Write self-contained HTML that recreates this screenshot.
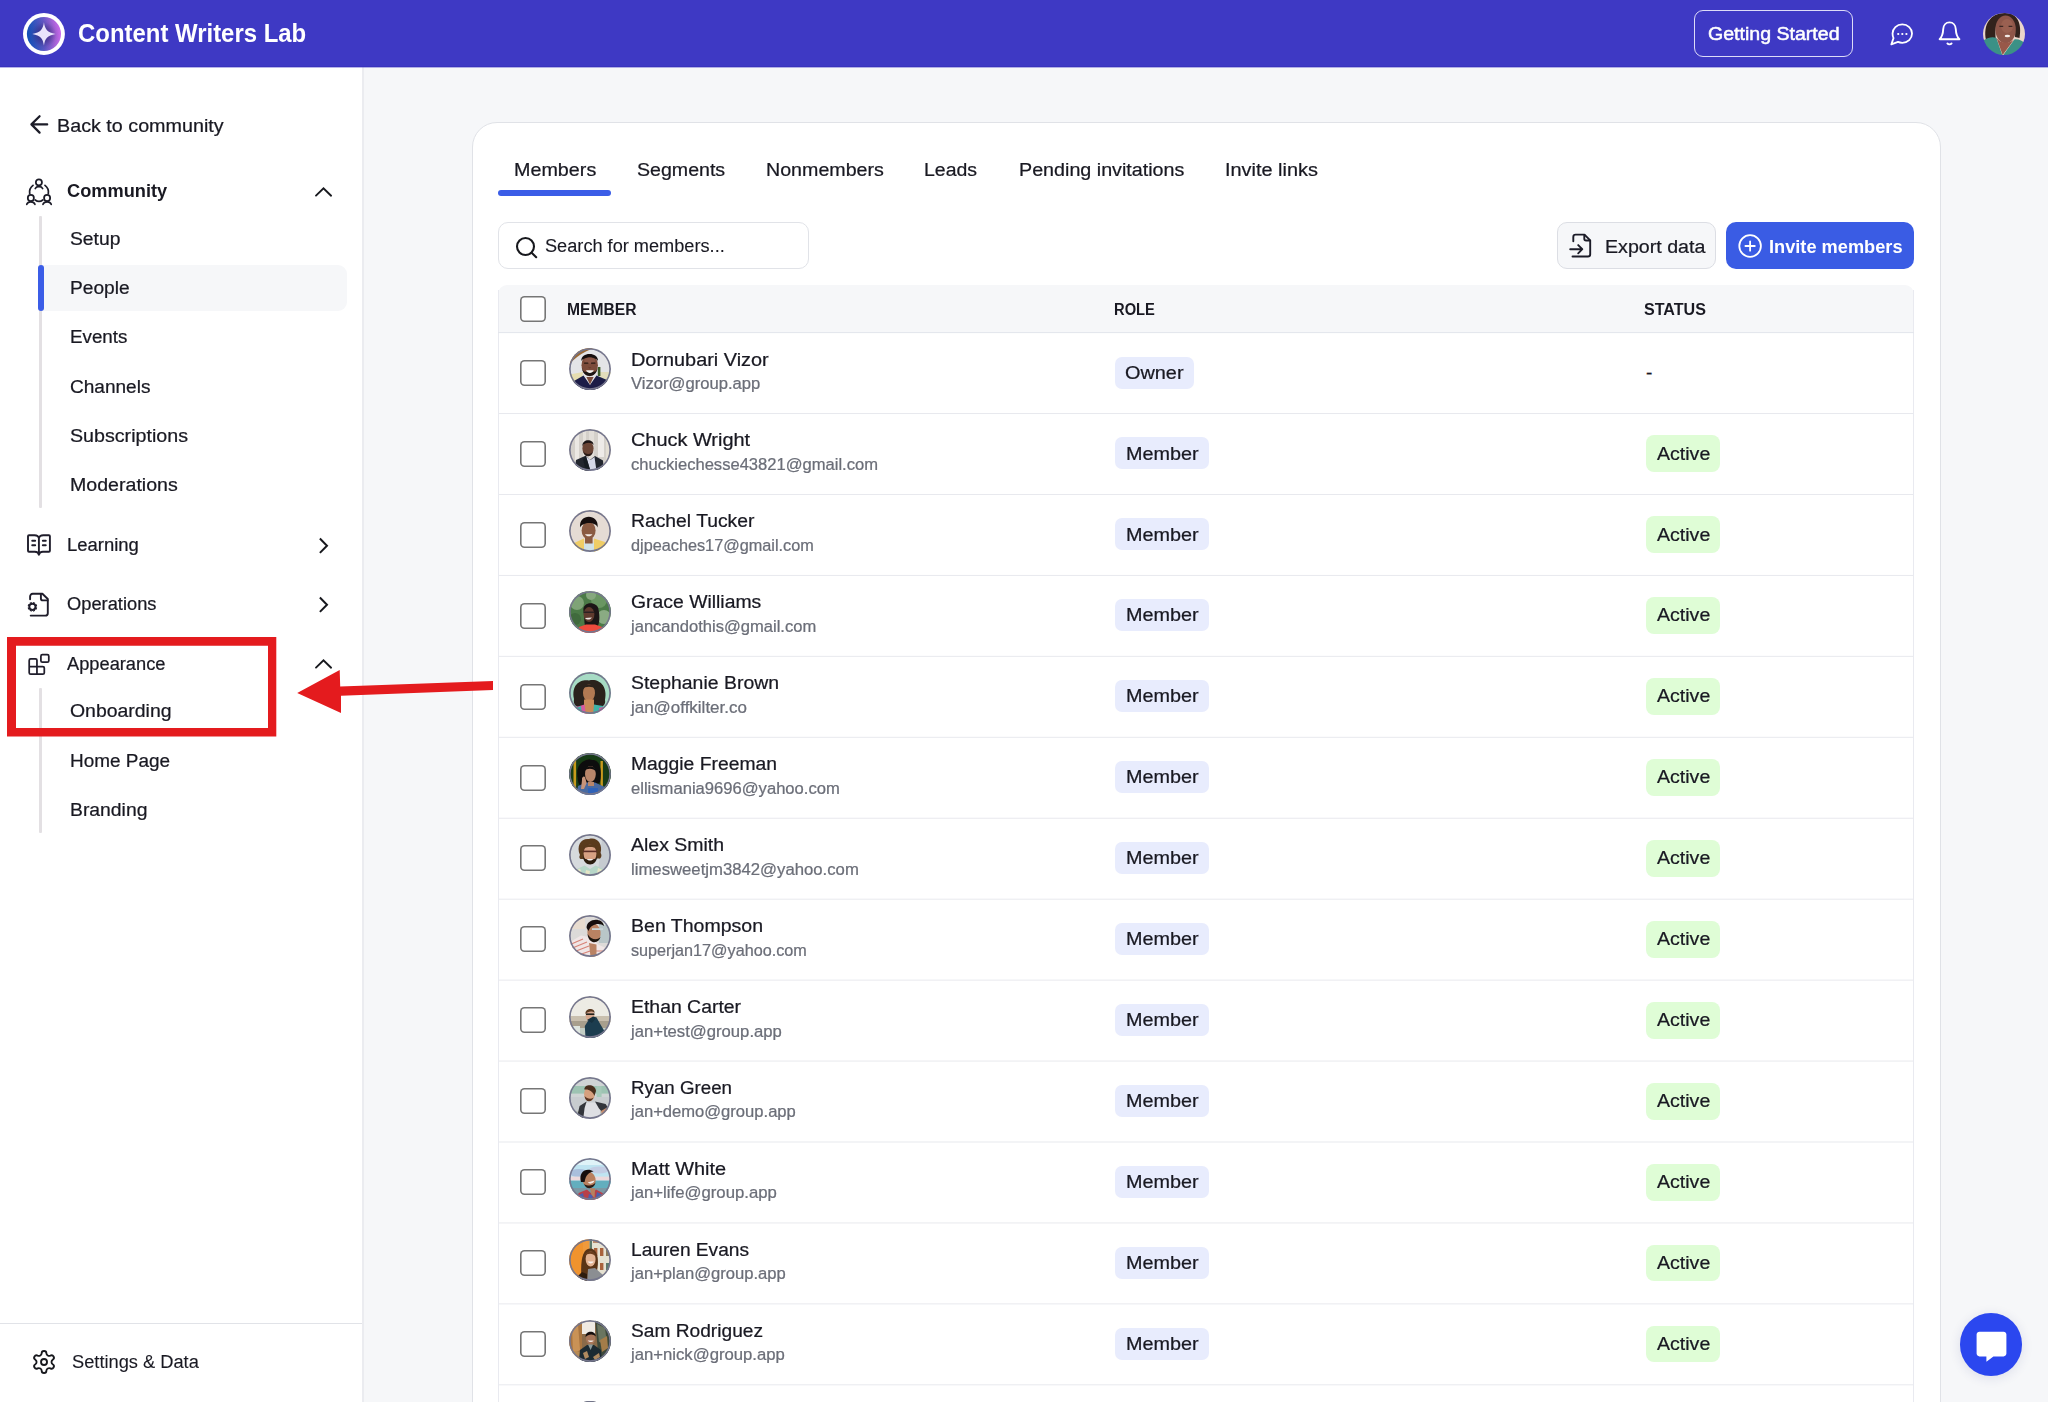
<!DOCTYPE html>
<html lang="en">
<head>
<meta charset="utf-8">
<title>Content Writers Lab - People</title>
<style>
*{box-sizing:border-box;margin:0;padding:0}
html,body{width:2048px;height:1402px;background:#f6f7f9;font-family:"Liberation Sans", sans-serif;}
#root{position:relative;width:2048px;height:1402px;overflow:hidden;background:#f6f7f9}
.abs,.t,.rowline,.cb,.role,.active,.av{position:absolute}
.t{white-space:pre;font-family:"Liberation Sans", sans-serif;transform-origin:0 50%}
#hdr{left:0;top:0;width:2048px;height:67px;background:#3e39c4;border-bottom:1px solid #3932bd}
#hdr2{left:0;top:67px;width:2048px;height:1px;background:rgba(62,57,196,.38)}
#side{left:0;top:67px;width:364px;height:1335px;background:#fff;border-right:2px solid #ebecf0}
#sidefoot{left:0;top:1322.5px;width:362px;height:1.5px;background:#e1e3e8}
.vline{width:3px;background:#e3e0e3;left:39px;border-radius:1px}
#people{left:38px;top:264.8px;width:309px;height:46.6px;background:#f6f7f9;border-radius:4px 9px 9px 4px}
#peoplebar{left:38px;top:264.8px;width:6px;height:46.6px;background:#3b5de7;border-radius:3px}
#card{left:471.5px;top:122px;width:1469.5px;height:1400px;background:#fff;border:1.5px solid #e0e2e7;border-radius:25px}
#tabline{left:498.3px;top:190px;width:112.7px;height:5.6px;background:#3b5de7;border-radius:3px}
#search{left:498.3px;top:222.2px;width:311.2px;height:46.5px;border:1.5px solid #e1e3e8;border-radius:10px;background:#fff}
#export{left:1557.2px;top:222.2px;width:158.6px;height:46.6px;border:1.5px solid #dcdee4;border-radius:10px;background:#f6f7f9}
#invite{left:1726px;top:222.2px;width:188.2px;height:46.6px;border-radius:10px;background:#3a5ce4}
#thead{left:498px;top:285px;width:1416px;height:47.5px;background:#f6f7f9;border-radius:9px 9px 0 0}
#tborderL{left:498px;top:290px;width:1px;height:1200px;background:#e9eaf0}
#tborderR{left:1913px;top:290px;width:1px;height:1200px;background:#e9eaf0}
.rowline{left:499px;width:1414px;height:1px;background:#ebecf1}
.cb{left:520px;width:26px;height:26px;border:none;box-shadow:inset 0 0 0 1.6px #767676;border-radius:4.5px;background:#fff}
.role{left:1115.4px;height:32px;border-radius:7px;background:#e8ecfd}
.active{left:1645.6px;width:74.6px;height:36.8px;border-radius:8px;background:#dffdd6}
.av{left:569px;width:42px;height:42px;border-radius:50%;overflow:hidden;background:#ccc}
.av::after{content:"";position:absolute;left:0;top:0;right:0;bottom:0;border-radius:50%;box-shadow:inset 0 0 0 1.7px #75768d}
.av svg{display:block;width:100%;height:100%}
#getstarted{left:1693.7px;top:10px;width:159.7px;height:47.1px;border:1.4px solid #dddcf8;border-radius:9px}
#fab{left:1960px;top:1313.2px;width:62.4px;height:62.4px;border-radius:50%;background:#2b47ef;box-shadow:0 2px 12px rgba(30,40,120,.12)}
#redbox{left:7px;top:637px;width:269.2px;height:99.4px;border:8.6px solid #e41b1e}
svg{position:absolute;overflow:visible}
</style>
</head>
<body>
<div id="root">
<div id="side" class="abs"></div>
<div id="sidefoot" class="abs"></div>
<div id="card" class="abs"></div>
<div id="hdr" class="abs"></div>
<div id="hdr2" class="abs"></div>

<!-- header -->
<svg style="left:23.1px;top:12.8px" width="41.9" height="41.9" viewBox="0 0 42 42"><defs><linearGradient id="lg" x1="0" y1="0.55" x2="1" y2="0.45"><stop offset="0" stop-color="#0f4fb6"/><stop offset="0.22" stop-color="#2f55bd"/><stop offset="0.5" stop-color="#6258c6"/><stop offset="0.8" stop-color="#a764d8"/><stop offset="1" stop-color="#c868ea"/></linearGradient><radialGradient id="rg" cx="0.5" cy="0.52" r="0.5"><stop offset="0" stop-color="#2a1f6e" stop-opacity="0.75"/><stop offset="0.45" stop-color="#2a1f6e" stop-opacity="0.45"/><stop offset="0.8" stop-color="#2a1f6e" stop-opacity="0.08"/><stop offset="1" stop-color="#2a1f6e" stop-opacity="0"/></radialGradient></defs><circle cx="21" cy="21" r="21" fill="#fff"/><circle cx="21" cy="21" r="17.1" fill="url(#lg)"/><circle cx="21" cy="21" r="15.5" fill="url(#rg)"/><path d="M21 9.3C22 16.3 24.3 19.5 32.7 21C24.3 22.5 22 25.7 21 32.7C20 25.7 17.7 22.5 9.3 21C17.7 19.5 20 16.3 21 9.3Z" fill="#e9e4fb"/></svg>

<div id="getstarted" class="abs"></div>
<svg style="left:1890.4px;top:22.6px" width="23.4" height="23" viewBox="0 0 24 23" fill="none" stroke="#fff" stroke-width="1.85" stroke-linecap="round" stroke-linejoin="round"><path d="M12.6 1.2C18.2 1.2 22.6 5.4 22.6 10.6C22.6 15.8 18.2 20 12.6 20C11 20 9.5 19.7 8.2 19.1L1.4 21.6L3.6 15.2C2.9 13.8 2.6 12.3 2.6 10.6C2.6 5.4 7 1.2 12.6 1.2Z"/><path d="M8.4 11H8.5M12.6 11H12.7M16.8 11H16.9" stroke-width="2.2"/></svg>

<svg style="left:1938.2px;top:21.2px" width="23" height="25" viewBox="0 0 23 25" fill="none" stroke="#fff" stroke-width="1.9" stroke-linecap="round" stroke-linejoin="round"><path d="M11.5 1.4C7.9 1.4 5.4 4.2 5.2 8.2C5 13 3.4 16.4 1.6 18.2H21.4C19.6 16.4 18 13 17.8 8.2C17.6 4.2 15.1 1.4 11.5 1.4Z"/><path d="M9.4 22.4C10.4 23.7 12.6 23.7 13.6 22.4"/></svg>

<svg style="left:1983px;top:12.7px" width="42" height="42" viewBox="0 0 42 42"><defs><clipPath id="uc"><circle cx="21" cy="21" r="21"/></clipPath><filter id="bl2" x="-5%" y="-5%" width="110%" height="110%"><feGaussianBlur stdDeviation="0.7"/></filter></defs><g clip-path="url(#uc)"><g filter="url(#bl2)"><rect x="-2" y="-2" width="46" height="46" fill="#ead6ca"/><path d="M3 27C0 12 7 0 22 0C35 0 39 11 36.5 25L32 24C33 14 30 5 22 5C14 5 11 14 13 28Z" fill="#33221f"/><ellipse cx="22.6" cy="16.4" rx="10.2" ry="14" fill="#8e5648"/><ellipse cx="24" cy="13" rx="6" ry="7" fill="#9a6051"/><path d="M-2 29C5 24 10 23.6 13.4 25L19.6 43L31.4 26.4C36 26 40 28 44 32V46H-2Z" fill="#3a9186"/><path d="M13.4 24.6L19.6 42L31 26.6C25 31.6 17 30.6 13.4 24.6Z" fill="#98594a"/><ellipse cx="24.4" cy="23" rx="2.7" ry="1.3" fill="#f3e9e6"/><path d="M16.4 13.4H20.2M25.6 13.4H29.4" stroke="#3a2622" stroke-width="1.2"/></g></g></svg>


<!-- sidebar -->
<svg style="left:30px;top:115px" width="18" height="19" viewBox="0 0 18 19"><path d="M17.2 9.4H1.6M9.6 1.2L1.4 9.4L9.6 17.6" fill="none" stroke="#1c1c28" stroke-width="2.2" stroke-linecap="round" stroke-linejoin="round"/></svg>

<svg style="left:26px;top:179px" width="26" height="26" viewBox="0 0 26 26" fill="none" stroke="#1c1c28" stroke-width="1.75" stroke-linecap="round"><circle cx="12.9" cy="3.35" r="3.05"/><path d="M9.3 9.5C10.4 6.9 15.5 6.9 16.6 9.5"/><circle cx="4.85" cy="19" r="3.05"/><path d="M0.8 25.3C1.9 22.1 7.8 22.1 8.9 25.3"/><circle cx="21.1" cy="19" r="3.05"/><path d="M17 25.3C18.1 22.1 24.1 22.1 25.2 25.3"/><path d="M7 6.4C4.4 8.4 3.2 11.6 3.7 14.6M19 6.4C21.6 8.4 22.8 11.6 22.3 14.6M9.2 21C11.4 22.6 14.6 22.6 16.8 21"/></svg>

<svg style="left:315px;top:187px" width="18" height="11" viewBox="0 0 18 11"><path d="M1 8.6L8.5 1.4L16.1 8.7" fill="none" stroke="#17181d" stroke-width="1.9" stroke-linecap="round" stroke-linejoin="miter"/></svg>

<div class="abs vline" style="top:215.5px;height:292.5px"></div>
<div id="people" class="abs"></div>
<div id="peoplebar" class="abs"></div>
<svg style="left:27px;top:534px" width="24" height="22" viewBox="0 0 24 22" fill="none" stroke="#1f1d2b" stroke-width="1.9" stroke-linecap="round" stroke-linejoin="round"><path d="M11.9 4.4V20.7M11.9 4.4C11.5 2.3 9.9 1.2 7.5 1.2H2C1.4 1.2 1 1.6 1 2.2V16.7C1 17.3 1.4 17.7 2 17.7H7.9C10.1 17.7 11.5 18.7 11.9 20.7M11.9 4.4C12.3 2.3 13.9 1.2 16.3 1.2H21.9C22.5 1.2 22.9 1.6 22.9 2.2V16.7C22.9 17.3 22.5 17.7 21.9 17.7H15.9C13.7 17.7 12.3 18.7 11.9 20.7"/><path d="M5.3 6.8H8.1M5.3 11.2H8.1M15.9 6.8H18.7M15.9 11.2H18.7" stroke-width="2.1"/></svg>

<svg style="left:318px;top:537.5px" width="11" height="16" viewBox="0 0 11 16"><path d="M2.6 1.2L9 7.7L2.6 14.2" fill="none" stroke="#17181d" stroke-width="2" stroke-linecap="square" stroke-linejoin="miter"/></svg>

<svg style="left:27px;top:593px" width="22" height="24" viewBox="0 0 22 24" fill="none" stroke="#1f1d2b" stroke-width="1.9" stroke-linecap="round" stroke-linejoin="round"><path d="M3.1 6.3V3.4C3.1 1.9 4.1 0.8 5.7 0.8H15.4L20.8 6V20.2C20.8 21.7 19.7 22.6 18.3 22.6H3.7"/><path d="M13.9 1.1V5.4C13.9 6.6 14.7 7.4 15.9 7.4H20.6"/><circle cx="5.4" cy="13.85" r="3.1"/><path d="M8.82 15.27L9.79 15.67M6.82 17.27L7.22 18.24M3.98 17.27L3.58 18.24M1.98 15.27L1.01 15.67M1.98 12.43L1.01 12.03M3.98 10.43L3.58 9.46M6.82 10.43L7.22 9.46M8.82 12.43L9.79 12.03" stroke-width="2.1" stroke-linecap="butt"/></svg>

<svg style="left:318px;top:597px" width="11" height="16" viewBox="0 0 11 16"><path d="M2.6 1.2L9 7.7L2.6 14.2" fill="none" stroke="#17181d" stroke-width="2" stroke-linecap="square" stroke-linejoin="miter"/></svg>

<svg style="left:28px;top:654px" width="22" height="22" viewBox="0 0 22 22" fill="none" stroke="#1f1d2b" stroke-width="1.75" stroke-linejoin="round"><path d="M2.7 4.9H7.5C8.3 4.9 8.95 5.5 8.95 6.3V12.55H14.8C15.6 12.55 16.3 13.2 16.3 14V18.7C16.3 19.5 15.6 20.2 14.8 20.2H2.7C1.9 20.2 1.2 19.5 1.2 18.7V6.4C1.2 5.6 1.9 4.9 2.7 4.9ZM8.95 12.55V20.2M1.2 12.55H8.95"/><rect x="12.9" y="0.7" width="7.9" height="7.5" rx="1.5"/></svg>

<svg style="left:315px;top:659.1px" width="18" height="11" viewBox="0 0 18 11"><path d="M1 8.6L8.5 1.4L16.1 8.7" fill="none" stroke="#17181d" stroke-width="1.9" stroke-linecap="round" stroke-linejoin="miter"/></svg>

<div class="abs vline" style="top:688px;height:144.5px"></div>
<svg style="left:32px;top:1349.8px" width="24" height="24" viewBox="0 0 24 24" fill="none" stroke="#17181d" stroke-width="1.85" stroke-linejoin="round"><path d="M9.68 3.31A2.35 2.35 0 0 1 14.38 3.31A2.77 2.77 0 0 0 18.38 5.62A2.35 2.35 0 0 1 20.73 9.69A2.77 2.77 0 0 0 20.73 14.31A2.35 2.35 0 0 1 18.38 18.38A2.77 2.77 0 0 0 14.38 20.69A2.35 2.35 0 0 1 9.68 20.69A2.77 2.77 0 0 0 5.68 18.38A2.35 2.35 0 0 1 3.33 14.31A2.77 2.77 0 0 0 3.33 9.69A2.35 2.35 0 0 1 5.68 5.62A2.77 2.77 0 0 0 9.68 3.31Z"/><circle cx="12.03" cy="12" r="3.0"/></svg>


<!-- main -->
<div id="tabline" class="abs"></div>
<div id="search" class="abs"></div>
<svg style="left:515.3px;top:235.7px" width="23" height="23" viewBox="0 0 23 23" fill="none" stroke="#17181d" stroke-width="2.1" stroke-linecap="round"><circle cx="10.5" cy="10.5" r="8.5"/><path d="M16.6 16.7L21.2 21.2"/></svg>

<div id="export" class="abs"></div>
<svg style="left:1569px;top:233px" width="23" height="25" viewBox="0 0 23 25" fill="none" stroke="#1c1c28" stroke-width="1.9" stroke-linecap="round" stroke-linejoin="round"><path d="M4.3 8.2V3.9C4.3 2.6 5.3 1.6 6.6 1.6H15.5L21.2 7.3V21.2C21.2 22.5 20.2 23.5 18.9 23.5H3.5"/><path d="M15.3 1.9V5.7C15.3 6.7 16.1 7.5 17.1 7.5H20.9"/><path d="M1.2 16.2H13M9.2 12.1L13.3 16.2L9.2 20.3"/></svg>

<div id="invite" class="abs"></div>
<svg style="left:1738px;top:233.8px" width="24" height="24" viewBox="0 0 24 24" fill="none" stroke="#fff" stroke-width="1.8" stroke-linecap="round"><circle cx="12.1" cy="12" r="10.8"/><path d="M12.1 7.3V16.7M7.4 12H16.8"/></svg>

<div id="thead" class="abs"></div>
<div id="tborderL" class="abs"></div>
<div id="tborderR" class="abs"></div>
<div class="cb" style="top:296px"></div>
<div class="cb" style="top:360px"></div>
<div class="role" style="top:356.55px;width:78.6px"></div>
<div class="av" style="top:348.45px"><svg viewBox="0 0 42 42" preserveAspectRatio="none"><defs><filter id="bl" x="-5%" y="-5%" width="110%" height="110%"><feGaussianBlur stdDeviation="0.7"/></filter></defs><g filter="url(#bl)"><rect x="-2" y="-2" width="46" height="46" fill="#e4e4e7"/><path d="M-2 -2H32C18 1 5 9 -2 20Z" fill="#9a6935"/><path d="M-2 27L14 24L12 38L-2 38Z" fill="#e6ddb0"/><path d="M30 24H44V36H31Z" fill="#e2dcbc"/><rect x="28.8" y="19" width="2.6" height="9" fill="#3e5a2c"/><ellipse cx="20.7" cy="17.2" rx="8.2" ry="11" fill="#7c4b3b"/><path d="M12.3 13C11.5 3.5 29.6 3.5 29 13C27 8.2 14.6 8.2 12.3 13Z" fill="#17110f"/><path d="M12.8 19C13.6 31 27.8 31 28.7 19C27.4 25.6 24 23.6 20.7 23.6C17.5 23.6 14.2 25.6 12.8 19Z" fill="#1e1512"/><ellipse cx="20.7" cy="12.6" rx="5.6" ry="3" fill="#8a5646"/><path d="M15.6 15.2H18.8M22.6 15.2H25.8" stroke="#2a1a16" stroke-width="1.3" stroke-linecap="round"/><path d="M19.6 19.4C20.3 20 21.1 20 21.8 19.4" stroke="#5e352a" stroke-width="0.9" fill="none"/><path d="M17 22.2C18.8 25.8 23 25.8 24.8 22.2Z" fill="#f6f3f0"/><path d="M-2 44L5 33L14.5 27.5L21 37L27.5 27.5L38 32L44 44Z" fill="#1a1e47"/><path d="M17.4 29L21 36.5L24.6 29Z" fill="#7c4b3b"/></g></svg>
</div>
<div class="cb" style="top:441px"></div>
<div class="role" style="top:437.49px;width:93.8px"></div>
<div class="active" style="top:435.29px"></div>
<div class="av" style="top:429.39px"><svg viewBox="0 0 42 42" preserveAspectRatio="none"><g filter="url(#bl)"><rect x="-2" y="-2" width="46" height="46" fill="#d4d0ca"/><rect x="6" y="-2" width="4" height="46" fill="#ebe8e3"/><rect x="14" y="-2" width="3" height="46" fill="#e6e2dc"/><rect x="20" y="-2" width="5" height="46" fill="#e2ded8"/><rect x="29" y="-2" width="6" height="30" fill="#eeebe8"/><rect x="37" y="-2" width="5" height="46" fill="#e4dfd4"/><ellipse cx="19" cy="19.5" rx="5.6" ry="7.6" fill="#6b4435"/><path d="M13.4 17C13 9.5 24.6 9.5 24.6 16C22.5 12.6 15.5 13 13.4 17Z" fill="#1a1413"/><path d="M14 22C15 29 23 29 24.2 22C22.5 26 16 26 14 22Z" fill="#2a1c18"/><path d="M5 44L7 31L16.5 26.8L21 31L26 27L34 31.5L35 44Z" fill="#22262f"/><path d="M17 27.5L21.5 42L27.5 42L25.5 28L21.5 31Z" fill="#d6d9e8"/><path d="M17 27L22 44L17 44L14 30Z" fill="#191c24"/></g></svg>
</div>
<div class="cb" style="top:522px"></div>
<div class="role" style="top:518.43px;width:93.8px"></div>
<div class="active" style="top:516.23px"></div>
<div class="av" style="top:510.33px"><svg viewBox="0 0 42 42" preserveAspectRatio="none"><g filter="url(#bl)"><rect x="-2" y="-2" width="46" height="46" fill="#e5dbd4"/><ellipse cx="19.6" cy="20.5" rx="7" ry="9" fill="#8a5a42"/><path d="M11.2 17.5C9 3 30.5 3 28.6 17.5C27 11.5 13.5 11.5 11.2 17.5Z" fill="#15100f"/><path d="M16 24.3C17.8 27 21.6 27 23.4 24.3Z" fill="#f4eeea"/><path d="M2 44L5 33L15 28.6L15.5 44Z" fill="#efcd66"/><path d="M40 44L36 32L25 28.6L24.5 44Z" fill="#efcd66"/><path d="M15 33H25V44H15Z" fill="#cfe1e8"/><path d="M16 27.5H23.6V33.5H16Z" fill="#8a5a42"/></g></svg>
</div>
<div class="cb" style="top:603px"></div>
<div class="role" style="top:599.37px;width:93.8px"></div>
<div class="active" style="top:597.17px"></div>
<div class="av" style="top:591.27px"><svg viewBox="0 0 42 42" preserveAspectRatio="none"><g filter="url(#bl)"><rect x="-2" y="-2" width="46" height="46" fill="#4c7a47"/><circle cx="8" cy="12" r="7" fill="#7fa377"/><circle cx="30" cy="9" r="8" fill="#6a9662"/><circle cx="35" cy="26" r="7" fill="#8aab83"/><circle cx="6" cy="28" r="6" fill="#3f6a3c"/><circle cx="22" cy="4" r="5" fill="#86a87e"/><path d="M14.5 20C13 10 29 10 29.6 19C31 26 30.5 32 28.5 36L24 34L16 35C15 31 15.5 25 14.5 20Z" fill="#1c1616"/><ellipse cx="20" cy="23.5" rx="5.4" ry="7.6" fill="#5e3a2e"/><path d="M14.6 20.5H25V22H14.6Z" fill="#2a2424"/><path d="M16 27C18 29.4 21.4 29 23 26.6Z" fill="#efe6e2"/><path d="M8 44L10 36L17 33.6L26 33.6L36 37L37 44Z" fill="#ee4b3c"/></g></svg>
</div>
<div class="cb" style="top:684px"></div>
<div class="role" style="top:680.31px;width:93.8px"></div>
<div class="active" style="top:678.11px"></div>
<div class="av" style="top:672.21px"><svg viewBox="0 0 42 42" preserveAspectRatio="none"><g filter="url(#bl)"><rect x="-2" y="-2" width="46" height="46" fill="#a6dbc4"/><path d="M5 27C2 12 12 7 20 8.5C30 6 39 14 36 28C37 33 33 36 30 34L12 35C7 36 4 32 5 27Z" fill="#2a211c"/><ellipse cx="20" cy="21" rx="6" ry="8.4" fill="#b27a52"/><path d="M13.6 17C15 11 25 11 26.4 17C24 14 16 14 13.6 17Z" fill="#2a211c"/><path d="M15 27.5H25V44H15Z" fill="#c98a58"/><path d="M4 44L7 35L15.5 32.4L17 44Z" fill="#d85aa0"/><path d="M38 44L34 34L25 32.4L24 44Z" fill="#3fb3a8"/><path d="M7 36L12 34L13 42L8 42Z" fill="#3fb3a8"/><path d="M30 36L34 35L35 42L30 42Z" fill="#d85aa0"/></g></svg>
</div>
<div class="cb" style="top:765px"></div>
<div class="role" style="top:761.25px;width:93.8px"></div>
<div class="active" style="top:759.05px"></div>
<div class="av" style="top:753.15px"><svg viewBox="0 0 42 42" preserveAspectRatio="none"><g filter="url(#bl)"><rect x="-2" y="-2" width="46" height="46" fill="#173a12"/><rect x="4.5" y="4" width="2.6" height="34" fill="#c89a1c"/><rect x="31.5" y="8" width="2.4" height="26" fill="#c89a1c"/><path d="M28 -2L44 -2L44 14Z" fill="#2f6a2a"/><path d="M8.5 24C6 8 20 5 23 7C32 6 33 20 31 29L26 33L12 33C9 31 9 27 8.5 24Z" fill="#0e0c0d"/><ellipse cx="21.4" cy="21" rx="5.4" ry="8" fill="#b8866a"/><path d="M15.6 18C17 11 27 12 27 19C25 15 18 14.6 15.6 18Z" fill="#0e0c0d"/><path d="M7 44L9 33L17 29.6L26 29.6L36 34L37 44Z" fill="#4a6aa0"/><path d="M13 27C12.5 24 15 22.6 16.2 24.4L17.6 30L15 36L12 36Z" fill="#c6947a"/><path d="M19 29H25V33H19Z" fill="#b8866a"/><path d="M19 35H29V44H19Z" fill="#2f62b8"/></g></svg>
</div>
<div class="cb" style="top:845px"></div>
<div class="role" style="top:842.19px;width:93.8px"></div>
<div class="active" style="top:839.99px"></div>
<div class="av" style="top:834.09px"><svg viewBox="0 0 42 42" preserveAspectRatio="none"><g filter="url(#bl)"><rect x="-2" y="-2" width="46" height="46" fill="#d6dadd"/><path d="M34 -2H44V44H28Z" fill="#c6cbd0"/><path d="M11 21C7 12 12 4 20 5C28 2.5 34 10 31.6 19C33.6 22 31.6 25.4 29.6 24.6L13 25C10.6 25.6 9.6 23 11 21Z" fill="#5a3a1f"/><ellipse cx="21" cy="19.6" rx="6.4" ry="9" fill="#d7a183"/><path d="M14.4 15C15.6 8.8 26.6 8.8 27.8 15C25 12.4 17.4 12.4 14.4 15Z" fill="#5a3a1f"/><path d="M14 21.6C14 33.6 28.2 33.6 28.2 21.6C26.6 26.8 24.2 25 21 25C17.8 25 15.4 26.8 14 21.6Z" fill="#2a1a10"/><path d="M14.2 16.6H28V18.2H14.2Z" fill="#5c2e26"/><path d="M17.8 25C19.2 27 22.8 27 24.2 25Z" fill="#f4eeea"/><path d="M4 44L7 35.6L15.6 31.6L21 35L26.6 31.6L35.4 35.6L38 44Z" fill="#b6d6c8"/><path d="M7 36.6L11 34.6L13 40L9 43ZM29 34L34 36L32 41L28 39ZM17 36L21 37L20 42L16 41Z" fill="#e6e6c6"/></g></svg>
</div>
<div class="cb" style="top:926px"></div>
<div class="role" style="top:923.13px;width:93.8px"></div>
<div class="active" style="top:920.93px"></div>
<div class="av" style="top:915.03px"><svg viewBox="0 0 42 42" preserveAspectRatio="none"><g filter="url(#bl)"><rect x="-2" y="-2" width="46" height="46" fill="#dcdad8"/><rect x="-2" y="-2" width="18" height="16" fill="#e8dccf"/><rect x="30" y="8" width="14" height="20" fill="#b9c6c8"/><rect x="34" y="-2" width="10" height="12" fill="#e9ecec"/><path d="M-2 44L1 27L12 20.4L20 22L30 30L37 33L38 44Z" fill="#f0e6e6"/><path d="M0 30L14 24M1 34L18 27M2 38L20 31M4 42L24 35M26 36L36 36M26 40L37 40" stroke="#d88378" stroke-width="1.2" fill="none"/><ellipse cx="25" cy="17.5" rx="6.6" ry="9" transform="rotate(-8 25 17.5)" fill="#b98263"/><path d="M17.6 13C17 3 34 1.6 35 11C31.6 7.6 22 8 19.6 16Z" fill="#16110f"/><path d="M18.6 19C19 29 30 30 31.6 21.6C29 26 21.6 25 18.6 19Z" fill="#1d1411"/><path d="M23 13.2H34V15H23Z" fill="#c9d4d6"/><path d="M20 28L27.5 29.5L27.5 42L21.5 42Z" fill="#b98263"/></g></svg>
</div>
<div class="cb" style="top:1007px"></div>
<div class="role" style="top:1004.07px;width:93.8px"></div>
<div class="active" style="top:1001.87px"></div>
<div class="av" style="top:995.97px"><svg viewBox="0 0 42 42" preserveAspectRatio="none"><g filter="url(#bl)"><rect x="-2" y="-2" width="46" height="46" fill="#edebe4"/><rect x="-2" y="20" width="46" height="6" fill="#c9bfae"/><rect x="-2" y="25" width="46" height="8" fill="#a89f8d"/><rect x="-2" y="32" width="46" height="12" fill="#c3cec5"/><rect x="3" y="30" width="8" height="12" fill="#dfe6e0"/><ellipse cx="21" cy="19.6" rx="4.4" ry="5.6" fill="#d8a98f"/><path d="M16.4 18C16 11.4 26 11.4 25.6 17C24 14.6 18.6 15 16.4 18Z" fill="#5a3a24"/><path d="M17 17.4H25.4V19H17Z" fill="#24201e"/><path d="M16.6 44L15.8 30L19 25L23 24.6L27.6 21.4L30.6 27L36 36L37 44Z" fill="#1f3d50"/><path d="M18 24L23 27L27.6 21.6L24 20.6Z" fill="#16303f"/></g></svg>
</div>
<div class="cb" style="top:1088px"></div>
<div class="role" style="top:1085.01px;width:93.8px"></div>
<div class="active" style="top:1082.81px"></div>
<div class="av" style="top:1076.91px"><svg viewBox="0 0 42 42" preserveAspectRatio="none"><g filter="url(#bl)"><rect x="-2" y="-2" width="46" height="46" fill="#cfd4d4"/><rect x="-2" y="9" width="46" height="7.6" fill="#9dc3b2"/><rect x="27.6" y="9" width="5" height="14" fill="#a6c9b8"/><rect x="-2" y="20" width="46" height="14" fill="#c8cccf"/><rect x="-2" y="34" width="46" height="10" fill="#b9bfb8"/><ellipse cx="20.4" cy="17" rx="5.4" ry="7" fill="#d6a07e"/><path d="M15.4 12.6C15 6.6 26.6 6.6 27 14L25.4 19C24 14 19 11.6 15.4 12.6Z" fill="#4a2e1c"/><path d="M15.6 19C16 25.4 22.6 26 24.6 20.6C22 22.6 18 22 15.6 19Z" fill="#5a3420"/><path d="M13.4 44L13.6 30L18 25.6L26 25.6L31 32L31.6 44Z" fill="#dedfe3"/><path d="M8 40L10.6 29L17.6 24.6L15.6 31L14.2 42Z" fill="#33353a"/><path d="M26 24.6L36.6 27L40 32L34 36L30 31.6Z" fill="#33353a"/><path d="M32 34L38 30.6L39.6 34L33.6 39Z" fill="#c98e6e"/></g></svg>
</div>
<div class="cb" style="top:1169px"></div>
<div class="role" style="top:1165.95px;width:93.8px"></div>
<div class="active" style="top:1163.75px"></div>
<div class="av" style="top:1157.85px"><svg viewBox="0 0 42 42" preserveAspectRatio="none"><g filter="url(#bl)"><rect x="-2" y="-2" width="46" height="46" fill="#bfe4f1"/><rect x="-2" y="-2" width="46" height="9" fill="#dff3f8"/><ellipse cx="10" cy="15" rx="10" ry="4" fill="#a9bfdc"/><ellipse cx="30" cy="12" rx="10" ry="3.6" fill="#c2cde4"/><rect x="-2" y="18.6" width="46" height="4" fill="#ecd9dc"/><rect x="-2" y="22.6" width="46" height="9" fill="#63aebe"/><rect x="-2" y="30" width="46" height="14" fill="#7b98a4"/><ellipse cx="20" cy="21.6" rx="6.6" ry="8" transform="rotate(-14 20 21.6)" fill="#b8805e"/><path d="M12 24C9 13 18 9 24.6 13.4C20 14 16.6 17 15.6 24Z" fill="#16110f"/><path d="M15 26C17 32 25 31.6 26.6 24.6C24 28 19 28.6 15 26Z" fill="#2a1a14"/><path d="M18.6 24.6C21 26.6 24.6 25.6 25.6 22.6Z" fill="#f1ebe8"/><path d="M7 44L9.6 35L18 31.6L23 36L27 31.6L34.6 35.6L36 44Z" fill="#b8414a"/><path d="M10 37L14 35L15 40L11 42ZM28 34L32 36L31 41L27 39ZM20 36L24 37L23 42L19 41Z" fill="#4b5fae"/><path d="M21 30L26 30.6L25.6 40L22.6 37Z" fill="#b8805e"/></g></svg>
</div>
<div class="cb" style="top:1250px"></div>
<div class="role" style="top:1246.89px;width:93.8px"></div>
<div class="active" style="top:1244.69px"></div>
<div class="av" style="top:1238.79px"><svg viewBox="0 0 42 42" preserveAspectRatio="none"><g filter="url(#bl)"><rect x="-2" y="-2" width="46" height="46" fill="#ef9a3e"/><path d="M-2 -2H14V44H-2Z" fill="#f0932f"/><rect x="20.6" y="-2" width="24" height="46" fill="#e6e2d2"/><rect x="20.6" y="-2" width="2.4" height="46" fill="#5d7a6a"/><rect x="25" y="9" width="3.4" height="8" fill="#a9623a"/><rect x="31" y="9" width="3.4" height="8" fill="#a9623a"/><rect x="37" y="9" width="3.4" height="8" fill="#8a7a5a"/><rect x="31" y="24" width="3.4" height="7" fill="#a9623a"/><rect x="37" y="24" width="3.4" height="7" fill="#5d7a6a"/><rect x="24" y="1" width="6" height="3" fill="#b98a6a"/><path d="M12.6 40C11 22 13.6 9.6 21 9.6C28.6 9.6 29.6 20 28.6 28L27 40Z" fill="#5a3418"/><ellipse cx="21.6" cy="20" rx="5" ry="7.4" fill="#e2b392"/><path d="M16 17C17 10.6 26 10.6 27 18C24 14 19 14 16 17Z" fill="#6a3e1c"/><path d="M18.6 22.6C20 25 23.4 25 24.8 22.4Z" fill="#f7f2ee"/><path d="M19 30L26 29L34 36L35 44L18 44Z" fill="#8b8e92"/><path d="M6 40L13 33L18 35L18 44L6 44Z" fill="#2f1d10"/></g></svg>
</div>
<div class="cb" style="top:1331px"></div>
<div class="role" style="top:1327.83px;width:93.8px"></div>
<div class="active" style="top:1325.63px"></div>
<div class="av" style="top:1319.73px"><svg viewBox="0 0 42 42" preserveAspectRatio="none"><g filter="url(#bl)"><rect x="-2" y="-2" width="46" height="46" fill="#8a6a48"/><rect x="13" y="-2" width="13" height="16" fill="#efe9e2"/><path d="M-2 -2H13V44H-2Z" fill="#a9743f"/><path d="M3 6L9 4L11 30L4 34Z" fill="#c99256"/><path d="M26 -2H44V44H30Z" fill="#3e4a3a"/><path d="M28 4L36 8L38 24L30 22Z" fill="#6a7461"/><path d="M-2 30L12 32L13 44L-2 44Z" fill="#b78a52"/><path d="M31 20L38 16L39 28L33 32Z" fill="#a47c49"/><ellipse cx="21.6" cy="18.6" rx="4.6" ry="6" fill="#a8765a"/><path d="M16.6 17C16 10 27 10 26.8 16.6C25 13.6 19 13.6 16.6 17Z" fill="#14100f"/><path d="M18.8 20.6C20 22.6 23.4 22.6 24.6 20.4Z" fill="#eee6e2"/><path d="M9.6 44L11 30L18 25L25 25L32 30L33 44Z" fill="#1d2a30"/><path d="M19 24.6L21.6 30L24 24.6Z" fill="#8b9a9c"/><path d="M14 33L18 31L20 37L16 39ZM24 37L30 33L31 37L26 40Z" fill="#b08a60"/></g></svg>
</div>
<div class="av" style="top:1400.67px"><svg viewBox="0 0 42 42" preserveAspectRatio="none"><g filter="url(#bl)"><rect x="-2" y="-2" width="46" height="46" fill="#5a5f70"/></g></svg>
</div>
<span class="t" style="left:78.02px;top:19.57px;font-size:26.38px;line-height:26.38px;font-weight:700;color:#fff;transform:scaleX(0.9073);">Content Writers Lab</span>
<span class="t" style="left:1707.82px;top:24.82px;font-size:18.88px;line-height:18.88px;font-weight:400;color:#fff;transform:scaleX(1.0371);-webkit-text-stroke:0.5px #fff;">Getting Started</span>
<span class="t" style="left:57.11px;top:115.82px;font-size:18.99px;line-height:18.99px;font-weight:400;color:#191922;transform:scaleX(1.0393);-webkit-text-stroke:0.24px;">Back to community</span>
<span class="t" style="left:67.18px;top:182.37px;font-size:18.46px;line-height:18.46px;font-weight:700;color:#191922;transform:scaleX(0.9876);">Community</span>
<span class="t" style="left:70.03px;top:228.82px;font-size:18.99px;line-height:18.99px;font-weight:400;color:#191922;transform:scaleX(1.0164);-webkit-text-stroke:0.24px;">Setup</span>
<span class="t" style="left:70.04px;top:278.06px;font-size:18.99px;line-height:18.99px;font-weight:400;color:#191922;transform:scaleX(1.0085);-webkit-text-stroke:0.24px;">People</span>
<span class="t" style="left:70.06px;top:327.30px;font-size:18.99px;line-height:18.99px;font-weight:400;color:#191922;transform:scaleX(0.9888);-webkit-text-stroke:0.24px;">Events</span>
<span class="t" style="left:70.04px;top:376.54px;font-size:18.99px;line-height:18.99px;font-weight:400;color:#191922;transform:scaleX(1.0025);-webkit-text-stroke:0.24px;">Channels</span>
<span class="t" style="left:70.02px;top:425.78px;font-size:18.99px;line-height:18.99px;font-weight:400;color:#191922;transform:scaleX(1.0351);-webkit-text-stroke:0.24px;">Subscriptions</span>
<span class="t" style="left:70.02px;top:475.02px;font-size:18.99px;line-height:18.99px;font-weight:400;color:#191922;transform:scaleX(1.0314);-webkit-text-stroke:0.24px;">Moderations</span>
<span class="t" style="left:67.17px;top:535.32px;font-size:18.99px;line-height:18.99px;font-weight:400;color:#191922;transform:scaleX(0.9713);-webkit-text-stroke:0.24px;">Learning</span>
<span class="t" style="left:67.18px;top:594.32px;font-size:18.99px;line-height:18.99px;font-weight:400;color:#191922;transform:scaleX(0.9632);-webkit-text-stroke:0.24px;">Operations</span>
<span class="t" style="left:67.18px;top:653.92px;font-size:18.99px;line-height:18.99px;font-weight:400;color:#191922;transform:scaleX(0.9615);-webkit-text-stroke:0.24px;">Appearance</span>
<span class="t" style="left:69.73px;top:700.92px;font-size:18.99px;line-height:18.99px;font-weight:400;color:#191922;transform:scaleX(1.0235);-webkit-text-stroke:0.24px;">Onboarding</span>
<span class="t" style="left:69.75px;top:750.52px;font-size:18.99px;line-height:18.99px;font-weight:400;color:#191922;transform:scaleX(0.9975);-webkit-text-stroke:0.24px;">Home Page</span>
<span class="t" style="left:69.73px;top:799.82px;font-size:18.99px;line-height:18.99px;font-weight:400;color:#191922;transform:scaleX(1.0190);-webkit-text-stroke:0.24px;">Branding</span>
<span class="t" style="left:72.48px;top:1352.86px;font-size:18px;line-height:18px;font-weight:400;color:#191922;transform:scaleX(1.0142);-webkit-text-stroke:0.1px;">Settings &amp; Data</span>
<span class="t" style="left:513.51px;top:160.17px;font-size:18.99px;line-height:18.99px;font-weight:400;color:#191922;transform:scaleX(1.0399);-webkit-text-stroke:0.24px;">Members</span>
<span class="t" style="left:636.62px;top:160.17px;font-size:18.99px;line-height:18.99px;font-weight:400;color:#191922;transform:scaleX(1.0314);-webkit-text-stroke:0.24px;">Segments</span>
<span class="t" style="left:765.52px;top:160.17px;font-size:18.99px;line-height:18.99px;font-weight:400;color:#191922;transform:scaleX(1.0344);-webkit-text-stroke:0.24px;">Nonmembers</span>
<span class="t" style="left:924.32px;top:160.17px;font-size:18.99px;line-height:18.99px;font-weight:400;color:#191922;transform:scaleX(1.0255);-webkit-text-stroke:0.24px;">Leads</span>
<span class="t" style="left:1018.61px;top:160.17px;font-size:18.99px;line-height:18.99px;font-weight:400;color:#191922;transform:scaleX(1.0376);-webkit-text-stroke:0.24px;">Pending invitations</span>
<span class="t" style="left:1225.30px;top:160.17px;font-size:18.99px;line-height:18.99px;font-weight:400;color:#191922;transform:scaleX(1.0480);-webkit-text-stroke:0.24px;">Invite links</span>
<span class="t" style="left:545.48px;top:237.06px;font-size:18px;line-height:18px;font-weight:400;color:#191922;transform:scaleX(1.0094);-webkit-text-stroke:0.1px;">Search for members...</span>
<span class="t" style="left:1604.82px;top:236.82px;font-size:18.99px;line-height:18.99px;font-weight:400;color:#191922;transform:scaleX(1.0337);-webkit-text-stroke:0.24px;">Export data</span>
<span class="t" style="left:1768.78px;top:237.42px;font-size:18.99px;line-height:18.99px;font-weight:700;color:#fff;transform:scaleX(0.9588);">Invite members</span>
<span class="t" style="left:567.05px;top:300.91px;font-size:16.35px;line-height:16.35px;font-weight:700;color:#191922;transform:scaleX(0.9579);">MEMBER</span>
<span class="t" style="left:1114.09px;top:300.91px;font-size:16.35px;line-height:16.35px;font-weight:700;color:#191922;transform:scaleX(0.9008);">ROLE</span>
<span class="t" style="left:1644.28px;top:300.91px;font-size:16.35px;line-height:16.35px;font-weight:700;color:#191922;transform:scaleX(0.9844);">STATUS</span>
<span class="t" style="left:630.71px;top:349.52px;font-size:18.99px;line-height:18.99px;font-weight:400;color:#191922;transform:scaleX(1.0467);-webkit-text-stroke:0.24px;">Dornubari Vizor</span>
<span class="t" style="left:630.85px;top:376.01px;font-size:15.82px;line-height:15.82px;font-weight:400;color:#6b6e78;transform:scaleX(1.0504);-webkit-text-stroke:0.24px;">Vizor@group.app</span>
<span class="t" style="left:1125.36px;top:362.67px;font-size:18.99px;line-height:18.99px;font-weight:400;color:#191922;transform:scaleX(1.0468);-webkit-text-stroke:0.24px;">Owner</span>
<span class="t" style="left:1646.05px;top:362.67px;font-size:18.99px;line-height:18.99px;font-weight:400;color:#191922;transform:scaleX(1.0000);-webkit-text-stroke:0.24px;">-</span>
<span class="t" style="left:630.70px;top:430.46px;font-size:18.99px;line-height:18.99px;font-weight:400;color:#191922;transform:scaleX(1.0484);-webkit-text-stroke:0.24px;">Chuck Wright</span>
<span class="t" style="left:630.85px;top:456.95px;font-size:15.82px;line-height:15.82px;font-weight:400;color:#6b6e78;transform:scaleX(1.0475);-webkit-text-stroke:0.24px;">chuckiechesse43821@gmail.com</span>
<span class="t" style="left:1126.01px;top:443.61px;font-size:18.99px;line-height:18.99px;font-weight:400;color:#191922;transform:scaleX(1.0425);-webkit-text-stroke:0.24px;">Member</span>
<span class="t" style="left:1656.62px;top:443.61px;font-size:18.99px;line-height:18.99px;font-weight:400;color:#191922;transform:scaleX(1.0302);-webkit-text-stroke:0.24px;">Active</span>
<span class="t" style="left:630.73px;top:511.40px;font-size:18.99px;line-height:18.99px;font-weight:400;color:#191922;transform:scaleX(1.0173);-webkit-text-stroke:0.24px;">Rachel Tucker</span>
<span class="t" style="left:630.87px;top:537.89px;font-size:15.82px;line-height:15.82px;font-weight:400;color:#6b6e78;transform:scaleX(1.0280);-webkit-text-stroke:0.24px;">djpeaches17@gmail.com</span>
<span class="t" style="left:1126.01px;top:524.55px;font-size:18.99px;line-height:18.99px;font-weight:400;color:#191922;transform:scaleX(1.0425);-webkit-text-stroke:0.24px;">Member</span>
<span class="t" style="left:1656.62px;top:524.55px;font-size:18.99px;line-height:18.99px;font-weight:400;color:#191922;transform:scaleX(1.0302);-webkit-text-stroke:0.24px;">Active</span>
<span class="t" style="left:630.73px;top:592.34px;font-size:18.99px;line-height:18.99px;font-weight:400;color:#191922;transform:scaleX(1.0204);-webkit-text-stroke:0.24px;">Grace Williams</span>
<span class="t" style="left:630.85px;top:618.83px;font-size:15.82px;line-height:15.82px;font-weight:400;color:#6b6e78;transform:scaleX(1.0469);-webkit-text-stroke:0.24px;">jancandothis@gmail.com</span>
<span class="t" style="left:1126.01px;top:605.49px;font-size:18.99px;line-height:18.99px;font-weight:400;color:#191922;transform:scaleX(1.0425);-webkit-text-stroke:0.24px;">Member</span>
<span class="t" style="left:1656.62px;top:605.49px;font-size:18.99px;line-height:18.99px;font-weight:400;color:#191922;transform:scaleX(1.0302);-webkit-text-stroke:0.24px;">Active</span>
<span class="t" style="left:630.73px;top:673.28px;font-size:18.99px;line-height:18.99px;font-weight:400;color:#191922;transform:scaleX(1.0239);-webkit-text-stroke:0.24px;">Stephanie Brown</span>
<span class="t" style="left:630.84px;top:699.77px;font-size:15.82px;line-height:15.82px;font-weight:400;color:#6b6e78;transform:scaleX(1.0720);-webkit-text-stroke:0.24px;">jan@offkilter.co</span>
<span class="t" style="left:1126.01px;top:686.43px;font-size:18.99px;line-height:18.99px;font-weight:400;color:#191922;transform:scaleX(1.0425);-webkit-text-stroke:0.24px;">Member</span>
<span class="t" style="left:1656.62px;top:686.43px;font-size:18.99px;line-height:18.99px;font-weight:400;color:#191922;transform:scaleX(1.0302);-webkit-text-stroke:0.24px;">Active</span>
<span class="t" style="left:630.73px;top:754.22px;font-size:18.99px;line-height:18.99px;font-weight:400;color:#191922;transform:scaleX(1.0176);-webkit-text-stroke:0.24px;">Maggie Freeman</span>
<span class="t" style="left:630.85px;top:780.71px;font-size:15.82px;line-height:15.82px;font-weight:400;color:#6b6e78;transform:scaleX(1.0499);-webkit-text-stroke:0.24px;">ellismania9696@yahoo.com</span>
<span class="t" style="left:1126.01px;top:767.37px;font-size:18.99px;line-height:18.99px;font-weight:400;color:#191922;transform:scaleX(1.0425);-webkit-text-stroke:0.24px;">Member</span>
<span class="t" style="left:1656.62px;top:767.37px;font-size:18.99px;line-height:18.99px;font-weight:400;color:#191922;transform:scaleX(1.0302);-webkit-text-stroke:0.24px;">Active</span>
<span class="t" style="left:630.72px;top:835.16px;font-size:18.99px;line-height:18.99px;font-weight:400;color:#191922;transform:scaleX(1.0256);-webkit-text-stroke:0.24px;">Alex Smith</span>
<span class="t" style="left:630.85px;top:861.65px;font-size:15.82px;line-height:15.82px;font-weight:400;color:#6b6e78;transform:scaleX(1.0569);-webkit-text-stroke:0.24px;">limesweetjm3842@yahoo.com</span>
<span class="t" style="left:1126.01px;top:848.31px;font-size:18.99px;line-height:18.99px;font-weight:400;color:#191922;transform:scaleX(1.0425);-webkit-text-stroke:0.24px;">Member</span>
<span class="t" style="left:1656.62px;top:848.31px;font-size:18.99px;line-height:18.99px;font-weight:400;color:#191922;transform:scaleX(1.0302);-webkit-text-stroke:0.24px;">Active</span>
<span class="t" style="left:630.72px;top:916.10px;font-size:18.99px;line-height:18.99px;font-weight:400;color:#191922;transform:scaleX(1.0285);-webkit-text-stroke:0.24px;">Ben Thompson</span>
<span class="t" style="left:630.87px;top:942.59px;font-size:15.82px;line-height:15.82px;font-weight:400;color:#6b6e78;transform:scaleX(1.0240);-webkit-text-stroke:0.24px;">superjan17@yahoo.com</span>
<span class="t" style="left:1126.01px;top:929.25px;font-size:18.99px;line-height:18.99px;font-weight:400;color:#191922;transform:scaleX(1.0425);-webkit-text-stroke:0.24px;">Member</span>
<span class="t" style="left:1656.62px;top:929.25px;font-size:18.99px;line-height:18.99px;font-weight:400;color:#191922;transform:scaleX(1.0302);-webkit-text-stroke:0.24px;">Active</span>
<span class="t" style="left:630.73px;top:997.04px;font-size:18.99px;line-height:18.99px;font-weight:400;color:#191922;transform:scaleX(1.0224);-webkit-text-stroke:0.24px;">Ethan Carter</span>
<span class="t" style="left:630.85px;top:1023.53px;font-size:15.82px;line-height:15.82px;font-weight:400;color:#6b6e78;transform:scaleX(1.0540);-webkit-text-stroke:0.24px;">jan+test@group.app</span>
<span class="t" style="left:1126.01px;top:1010.19px;font-size:18.99px;line-height:18.99px;font-weight:400;color:#191922;transform:scaleX(1.0425);-webkit-text-stroke:0.24px;">Member</span>
<span class="t" style="left:1656.62px;top:1010.19px;font-size:18.99px;line-height:18.99px;font-weight:400;color:#191922;transform:scaleX(1.0302);-webkit-text-stroke:0.24px;">Active</span>
<span class="t" style="left:630.76px;top:1077.98px;font-size:18.99px;line-height:18.99px;font-weight:400;color:#191922;transform:scaleX(0.9866);-webkit-text-stroke:0.24px;">Ryan Green</span>
<span class="t" style="left:630.85px;top:1104.47px;font-size:15.82px;line-height:15.82px;font-weight:400;color:#6b6e78;transform:scaleX(1.0486);-webkit-text-stroke:0.24px;">jan+demo@group.app</span>
<span class="t" style="left:1126.01px;top:1091.13px;font-size:18.99px;line-height:18.99px;font-weight:400;color:#191922;transform:scaleX(1.0425);-webkit-text-stroke:0.24px;">Member</span>
<span class="t" style="left:1656.62px;top:1091.13px;font-size:18.99px;line-height:18.99px;font-weight:400;color:#191922;transform:scaleX(1.0302);-webkit-text-stroke:0.24px;">Active</span>
<span class="t" style="left:630.70px;top:1158.92px;font-size:18.99px;line-height:18.99px;font-weight:400;color:#191922;transform:scaleX(1.0480);-webkit-text-stroke:0.24px;">Matt White</span>
<span class="t" style="left:630.85px;top:1185.41px;font-size:15.82px;line-height:15.82px;font-weight:400;color:#6b6e78;transform:scaleX(1.0580);-webkit-text-stroke:0.24px;">jan+life@group.app</span>
<span class="t" style="left:1126.01px;top:1172.07px;font-size:18.99px;line-height:18.99px;font-weight:400;color:#191922;transform:scaleX(1.0425);-webkit-text-stroke:0.24px;">Member</span>
<span class="t" style="left:1656.62px;top:1172.07px;font-size:18.99px;line-height:18.99px;font-weight:400;color:#191922;transform:scaleX(1.0302);-webkit-text-stroke:0.24px;">Active</span>
<span class="t" style="left:630.74px;top:1239.86px;font-size:18.99px;line-height:18.99px;font-weight:400;color:#191922;transform:scaleX(1.0074);-webkit-text-stroke:0.24px;">Lauren Evans</span>
<span class="t" style="left:630.85px;top:1266.35px;font-size:15.82px;line-height:15.82px;font-weight:400;color:#6b6e78;transform:scaleX(1.0495);-webkit-text-stroke:0.24px;">jan+plan@group.app</span>
<span class="t" style="left:1126.01px;top:1253.01px;font-size:18.99px;line-height:18.99px;font-weight:400;color:#191922;transform:scaleX(1.0425);-webkit-text-stroke:0.24px;">Member</span>
<span class="t" style="left:1656.62px;top:1253.01px;font-size:18.99px;line-height:18.99px;font-weight:400;color:#191922;transform:scaleX(1.0302);-webkit-text-stroke:0.24px;">Active</span>
<span class="t" style="left:630.74px;top:1320.80px;font-size:18.99px;line-height:18.99px;font-weight:400;color:#191922;transform:scaleX(1.0091);-webkit-text-stroke:0.24px;">Sam Rodriguez</span>
<span class="t" style="left:630.85px;top:1347.29px;font-size:15.82px;line-height:15.82px;font-weight:400;color:#6b6e78;transform:scaleX(1.0555);-webkit-text-stroke:0.24px;">jan+nick@group.app</span>
<span class="t" style="left:1126.01px;top:1333.95px;font-size:18.99px;line-height:18.99px;font-weight:400;color:#191922;transform:scaleX(1.0425);-webkit-text-stroke:0.24px;">Member</span>
<span class="t" style="left:1656.62px;top:1333.95px;font-size:18.99px;line-height:18.99px;font-weight:400;color:#191922;transform:scaleX(1.0302);-webkit-text-stroke:0.24px;">Active</span>

<!-- annotation -->

<svg style="left:0;top:0" width="2048" height="1402" viewBox="0 0 2048 1402"><rect x="499" y="413.04" width="1414" height="1" fill="#e8e9ee"/><rect x="499" y="493.98" width="1414" height="1" fill="#e8e9ee"/><rect x="499" y="574.92" width="1414" height="1" fill="#e8e9ee"/><rect x="499" y="655.86" width="1414" height="1" fill="#e8e9ee"/><rect x="499" y="736.80" width="1414" height="1" fill="#e8e9ee"/><rect x="499" y="817.74" width="1414" height="1" fill="#e8e9ee"/><rect x="499" y="898.68" width="1414" height="1" fill="#e8e9ee"/><rect x="499" y="979.62" width="1414" height="1" fill="#e8e9ee"/><rect x="499" y="1060.56" width="1414" height="1" fill="#e8e9ee"/><rect x="499" y="1141.50" width="1414" height="1" fill="#e8e9ee"/><rect x="499" y="1222.44" width="1414" height="1" fill="#e8e9ee"/><rect x="499" y="1303.38" width="1414" height="1" fill="#e8e9ee"/><rect x="499" y="1384.32" width="1414" height="1" fill="#e8e9ee"/><rect x="498" y="332.1" width="1416" height="1" fill="#e3e5eb"/><path fill-rule="evenodd" d="M7 637H276.3V736.5H7ZM16 645.8V728H268V645.8Z" fill="#e41b1e"/><path d="M297.2 693.1L339.7 669.9L340.2 686.6L493 681.1V689.9L341 695.8V712.9Z" fill="#e41b1e"/></svg>

<div id="fab" class="abs"></div>
<svg style="left:1975.6px;top:1331px" width="31" height="32" viewBox="0 0 31 32"><path d="M3.4 0.8H27.6C29.1 0.8 30.4 2.1 30.4 3.6V22.6C30.4 24.1 29.1 25.4 27.6 25.4H17.4L10.4 30.8V25.4H3.4C1.9 25.4 0.6 24.1 0.6 22.6V3.6C0.6 2.1 1.9 0.8 3.4 0.8Z" fill="#fff"/></svg>

</div>
</body>
</html>
